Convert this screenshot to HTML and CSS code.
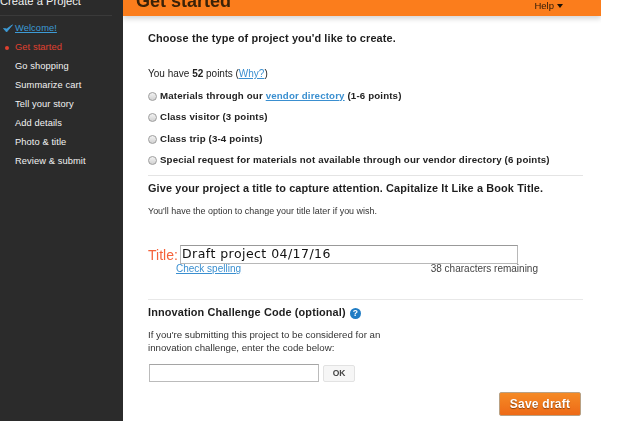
FILE: index.html
```html
<!DOCTYPE html>
<html lang="en">
<head>
<meta charset="utf-8">
<title>Get started</title>
<link rel="stylesheet" href="styles.css">
</head>
<body>
<div class="app">
  <aside class="sidebar">
    <div class="side-title"><span>Create a Project</span></div>
    <ul class="steps">
      <li class="step done"><svg class="check" viewBox="0 0 10 9" width="10" height="9"><path d="M0.5 4.5 L3.6 8 L9.5 0.8 L3.8 4.9 Z" fill="#3d9bd6" stroke="#3d9bd6" stroke-width="0.8"/></svg><a href="#">Welcome!</a></li>
      <li class="step current"><i class="dot"></i>Get started</li>
      <li class="step">Go shopping</li>
      <li class="step">Summarize cart</li>
      <li class="step">Tell your story</li>
      <li class="step">Add details</li>
      <li class="step">Photo &amp; title</li>
      <li class="step">Review &amp; submit</li>
    </ul>
  </aside>
  <div class="main">
    <header class="topbar">
      <h1>Get started</h1>
      <span class="help">Help<i class="caret"></i></span>
    </header>
    <div class="content">
      <p class="q first">Choose the type of project you'd like to create.</p>
      <p class="points">You have <b>52</b> points (<a href="#">Why?</a>)</p>
      <div class="options">
        <label class="opt"><i class="radio"></i><span>Materials through our <a href="#">vendor directory</a> (1-6 points)</span></label>
        <label class="opt"><i class="radio"></i><span>Class visitor (3 points)</span></label>
        <label class="opt"><i class="radio"></i><span>Class trip (3-4 points)</span></label>
        <label class="opt"><i class="radio"></i><span>Special request for materials not available through our vendor directory (6 points)</span></label>
      </div>
      <section class="title-sec">
        <p class="q">Give your project a title to capture attention. Capitalize It Like a Book Title.</p>
        <p class="note">You'll have the option to change your title later if you wish.</p>
        <div class="title-row">
          <span class="title-label">Title:</span>
          <div class="title-input">Draft project 04/17/16</div>
        </div>
        <div class="title-meta">
          <a href="#">Check spelling</a>
          <span>38 characters remaining</span>
        </div>
      </section>
      <section class="code-sec">
        <p class="q code-h">Innovation Challenge Code (optional) <i class="qmark">?</i></p>
        <p class="code-note">If you're submitting this project to be considered for an innovation challenge, enter the code below:</p>
        <div class="code-row">
          <div class="code-input"></div>
          <span class="ok">OK</span>
        </div>
      </section>
      <div class="actions"><span class="save">Save draft</span></div>
    </div>
  </div>
</div>
</body>
</html>
```
FILE: styles.css
```css
* { box-sizing: border-box; }
html, body { margin: 0; padding: 0; background: #fff; }
body { font-family: "Liberation Sans", Arial, sans-serif; color: #222; overflow: hidden; }
p { margin: 0; }
a { color: #3a8fd0; text-decoration: underline; }
.app { display: flex; width: 640px; height: 421px; overflow: hidden; filter: blur(0.4px); }

.sidebar { width: 123px; flex: none; background: #2b2b2b; color: #f2f2f2; font-size: 9.3px; }
.side-title { height: 16px; margin-right: 11px; border-bottom: 1px solid #3a3a3a; display: flex; align-items: flex-end; overflow: hidden; font-size: 11.2px; line-height: 14px; }
.side-title span { padding-bottom: 7px; white-space: nowrap; }
.steps { list-style: none; margin: 0; padding: 2.5px 0 0 15px; }
.step { position: relative; height: 19px; line-height: 19px; letter-spacing: 0.01em; white-space: nowrap; font-weight: 400; }
.step.done a { color: #3d9bd6; }
.step.current { color: #e0402f; }
.check { position: absolute; left: -12px; top: 5px; }
.dot { position: absolute; left: -10px; top: 8px; width: 4px; height: 4px; border-radius: 50%; background: #e0402f; }

.main { flex: 1; min-width: 0; }
.topbar { width: 478px; height: 16px; background: #fb7d1c; position: relative; display: flex; justify-content: space-between; padding: 0 38px 0 13px; box-shadow: 0 3px 5px rgba(0,0,0,0.16); clip-path: inset(0 0 -8px 0); }
.topbar h1 { margin: -10px 0 0; font-size: 18px; line-height: 22px; height: 22px; font-weight: 700; color: #3a2208; white-space: nowrap; }
.help { align-self: flex-start; font-size: 9.5px; line-height: 11px; color: #2b1a08; display: flex; align-items: center; gap: 3px; }
.caret { width: 0; height: 0; border: 3.5px solid transparent; border-top: 4px solid #1c1208; border-bottom: 0; }

.content { width: 460px; padding: 0 0 0 25px; font-size: 10px; }
.q { font-weight: 700; font-size: 10.9px; letter-spacing: 0.012em; color: #1e1e1e; line-height: 13px; white-space: nowrap; }
.first { margin-top: 16px; }
.points { margin-top: 22px; line-height: 14px; }
.options { margin-top: 4px; }
.opt { display: flex; align-items: center; height: 21.3px; font-weight: 700; font-size: 9.7px; letter-spacing: 0.016em; white-space: nowrap; }
.radio { flex: none; width: 9px; height: 9px; margin: 2px 3px 0 0; border-radius: 50%; border: 1px solid #9d9d9d; background: linear-gradient(#f3f3f3, #d2d2d2); }
.title-sec { margin-top: 5px; width: 435px; border-top: 1px solid #e4e4e4; padding-top: 6px; }
.note { font-size: 8.95px; line-height: 13px; color: #333; margin-top: 10px; }
.title-row { display: flex; align-items: center; margin-top: 27px; height: 19px; }
.title-label { width: 32px; font-size: 14px; color: #f5623a; }
.title-input { width: 338px; height: 19px; border: 1px solid #b8b8b8; border-top-color: #999; font-family: "DejaVu Sans", sans-serif; font-size: 12.5px; letter-spacing: 0.45px; line-height: 16px; padding-left: 1px; color: #111; white-space: nowrap; }
.title-meta { display: flex; justify-content: space-between; width: 390px; padding-left: 28px; font-size: 10px; line-height: 12px; margin-top: -1px; color: #444; }
.code-sec { margin-top: 24px; width: 435px; border-top: 1px solid #e8e8e8; padding-top: 6px; }
.code-h { font-size: 10.9px; }
.qmark { display: inline-block; width: 11px; height: 11px; border-radius: 50%; background: #1f7cc4; color: #fff; font-style: normal; font-size: 8.5px; line-height: 11px; text-align: center; margin-left: 1px; }
.code-note { width: 250px; margin-top: 9px; font-size: 9.7px; line-height: 13px; color: #333; }
.code-row { display: flex; align-items: center; gap: 4px; margin-top: 10px; padding-left: 1px; }
.code-input { width: 170px; height: 18px; border: 1px solid #bbb; border-top-color: #a5a5a5; }
.ok { width: 32px; height: 17px; border: 1px solid #e2e2e2; border-radius: 2px; background: #f6f6f6; text-align: center; font-weight: 700; font-size: 8.5px; line-height: 15px; color: #444; }
.actions { display: flex; justify-content: flex-end; width: 433px; margin-top: 10px; }
.save { width: 82px; height: 24px; background: linear-gradient(#f58a25, #ee6a17); border: 1px solid #b9a184; border-radius: 2px; color: #fff; font-weight: 700; font-size: 12px; line-height: 22px; text-align: center; letter-spacing: 0.02em; text-shadow: 0 1px 1px rgba(0,0,0,0.45); }
```
